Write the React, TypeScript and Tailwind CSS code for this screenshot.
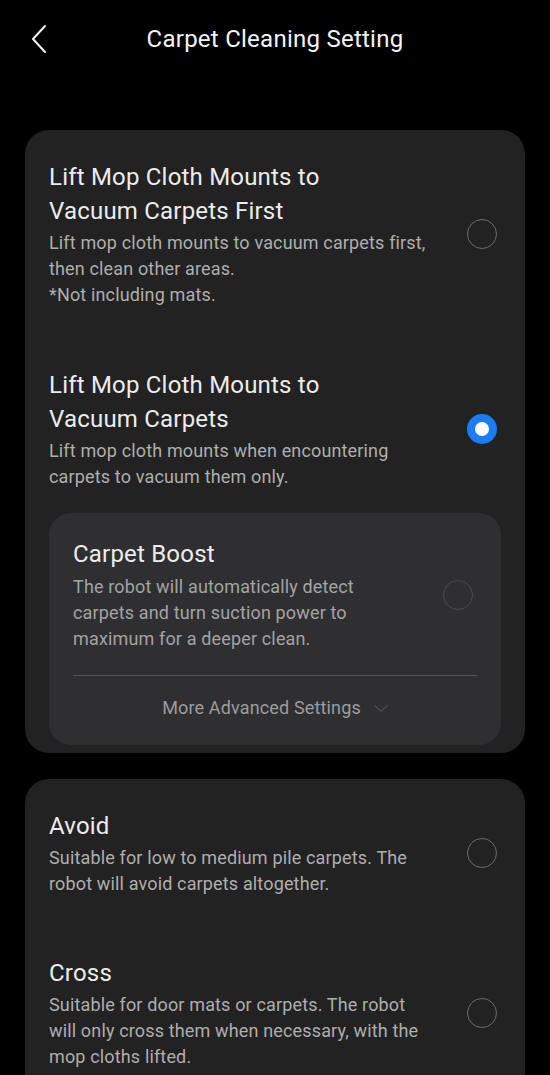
import React from "react";

function Radio({ checked, dim }: { checked?: boolean; dim?: boolean }) {
  if (checked) {
    return (
      <div className="w-[30px] h-[30px] rounded-full bg-[#1b7cf3] flex items-center justify-center shrink-0">
        <div className="w-[14px] h-[14px] rounded-full bg-white" />
      </div>
    );
  }
  return (
    <div
      className={
        "w-[30px] h-[30px] rounded-full border-[1.5px] shrink-0 " +
        (dim ? "border-[#4b4b4d]" : "border-[#6c6c6c]")
      }
    />
  );
}

function Option({
  title,
  desc,
  checked,
}: {
  title: React.ReactNode;
  desc: React.ReactNode;
  checked?: boolean;
}) {
  return (
    <div className="flex items-center justify-between pl-[24px] pr-[28px]">
      <div className="w-[383px]">
        <div className="text-[24px] leading-[34px] tracking-[0.2px] text-[#ececec]">{title}</div>
        <div className="mt-[2px] text-[18px] leading-[26px] tracking-[0.15px] text-[#aeaeae]">{desc}</div>
      </div>
      <Radio checked={checked} />
    </div>
  );
}

export default function App() {
  return (
    <div
      className="w-[550px] h-[1075px] bg-black overflow-hidden"
      style={{ fontFamily: "Roboto, 'Noto Sans', sans-serif" }}
    >
      <div className="relative h-[78px] flex items-center justify-center">
        <svg
          className="absolute left-[30px] top-[24px]"
          width="18"
          height="30"
          viewBox="0 0 18 30"
          fill="none"
        >
          <path d="M15 2 L3 15 L15 28" stroke="#f2f2f2" strokeWidth="2" strokeLinecap="round" strokeLinejoin="round" />
        </svg>
        <div className="text-[24px] text-[#f4f4f4] leading-[34px] tracking-[0.25px]">Carpet Cleaning Setting</div>
      </div>

      <div className="mx-[25px] mt-[52px] bg-[#222222] rounded-[24px] pt-[30px] pb-[8px]">
        <Option
          title={<>Lift Mop Cloth Mounts to<br />Vacuum Carpets First</>}
          desc={<>Lift mop cloth mounts to vacuum carpets first, then clean other areas.<br />*Not including mats.</>}
        />
        <div className="h-[60px]" />
        <Option
          title={<>Lift Mop Cloth Mounts to<br />Vacuum Carpets</>}
          desc="Lift mop cloth mounts when encountering carpets to vacuum them only."
          checked
        />
        <div className="mx-[24px] mt-[23px] bg-[#2f2f31] rounded-[22px] pt-[24px] pb-[24px] px-[24px]">
          <div className="flex items-center justify-between pr-[4px]">
            <div className="w-[300px]">
              <div className="text-[24px] leading-[34px] tracking-[0.2px] text-[#ececec]">Carpet Boost</div>
              <div className="mt-[3px] text-[18px] leading-[26px] tracking-[0.15px] text-[#a3a3a3]">
                The robot will automatically detect carpets and turn suction power to maximum for a deeper clean.
              </div>
            </div>
            <Radio dim />
          </div>
          <div className="mt-[23px] h-px bg-[#545456]" />
          <div className="mt-[19px] flex items-center justify-center gap-[13px]">
            <span className="text-[18px] leading-[26px] tracking-[0.15px] text-[#9c9c9c]">More Advanced Settings</span>
            <svg width="14" height="9" viewBox="0 0 14 9" fill="none">
              <path d="M1 2 L7 7 L13 2" stroke="#4c4c4e" strokeWidth="1.5" strokeLinecap="round" strokeLinejoin="round" />
            </svg>
          </div>
        </div>
      </div>

      <div className="mx-[25px] mt-[26px] bg-[#222222] rounded-[24px] pt-[30px] pb-[30px]">
        <Option
          title="Avoid"
          desc="Suitable for low to medium pile carpets. The robot will avoid carpets altogether."
        />
        <div className="h-[59px]" />
        <Option
          title="Cross"
          desc="Suitable for door mats or carpets. The robot will only cross them when necessary, with the mop cloths lifted."
        />
      </div>
    </div>
  );
}
